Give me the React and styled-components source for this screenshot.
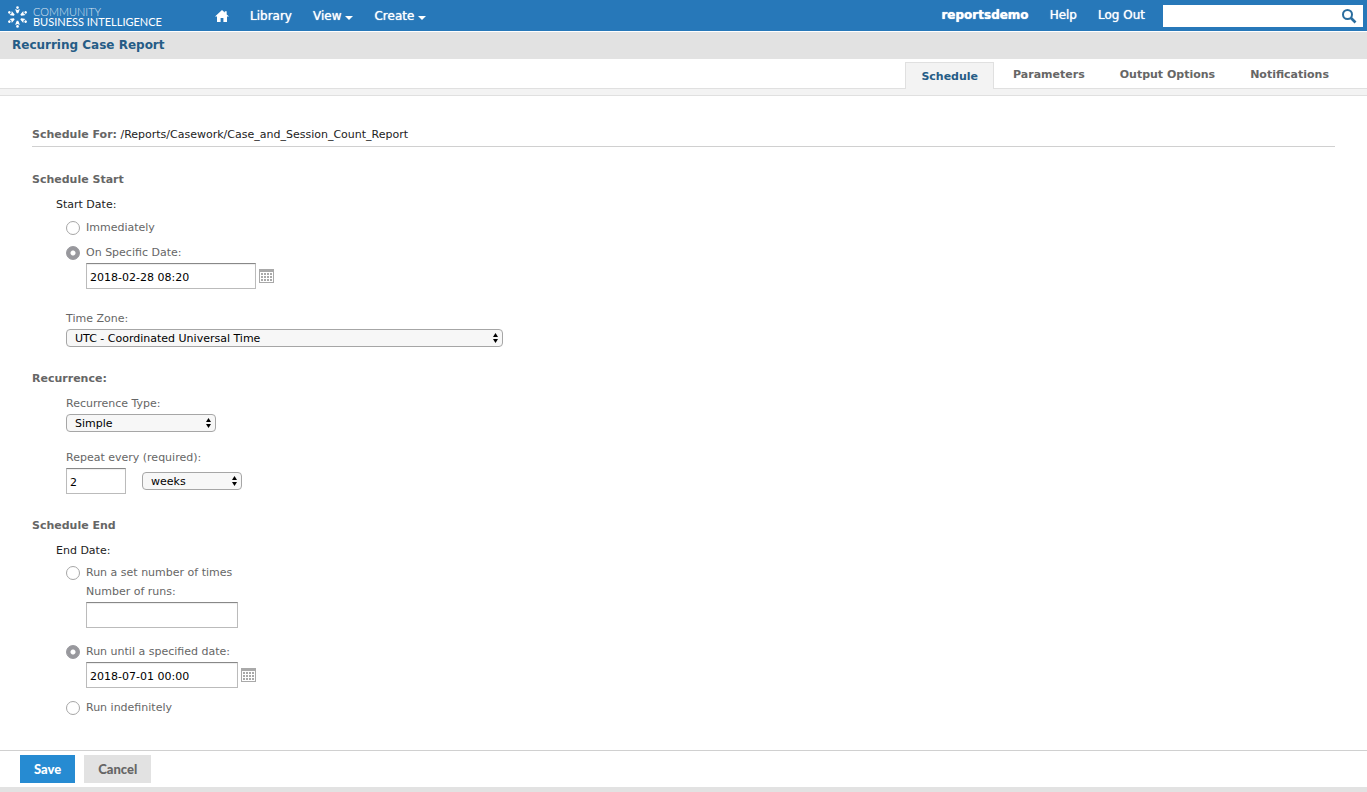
import React from "react";
import styled, { createGlobalStyle, css } from "styled-components";

const GlobalStyle = createGlobalStyle`
  *, *::before, *::after { box-sizing: border-box; }
  body {
    margin: 0;
    background: #fff;
    color: #222;
    font: 11px/20px Verdana, "DejaVu Sans", sans-serif;
  }
`;

const Page = styled.div`
  display: flex;
  flex-direction: column;
  min-height: 100vh;
`;

const TopBar = styled.header`
  display: flex;
  align-items: center;
  height: 31px;
  padding: 0 4px 0 7px;
  background: #2778b9;
`;

const Brand = styled.a`
  display: flex;
  align-items: center;
  gap: 5px;
  width: 208px;
  padding-top: 2px;
  color: #fff;
  text-decoration: none;
`;

const BrandName = styled.span`
  display: flex;
  flex-direction: column;
  font: 11px/10px Lato, sans-serif;
  white-space: nowrap;
`;

const BrandLight = styled.span`
  font-weight: 300;
  opacity: 0.8;
`;

const Nav = styled.nav`
  display: flex;
  align-items: center;
  gap: 21px;
`;

const NavLink = styled.a`
  display: flex;
  align-items: center;
  gap: 4px;
  color: #fff;
  font-size: 12px;
  font-weight: ${(p) => (p.$strong ? "bold" : "normal")};
  text-decoration: none;
  text-shadow: 0 0 1px #fff;
  white-space: nowrap;
`;

const Caret = styled.span`
  margin-top: 4px;
  border: 4px solid transparent;
  border-top-color: #fff;
  border-bottom: 0;
`;

const UserNav = styled(Nav)`
  margin-left: auto;
  padding-bottom: 1px;
`;

const SearchBox = styled.form`
  display: flex;
  align-items: center;
  width: 200px;
  height: 22px;
  margin-left: 18px;
  background: #fff;
`;

const SearchInput = styled.input`
  flex: 1;
  min-width: 0;
  border: 0;
  outline: 0;
  padding: 0 6px;
  background: none;
  font: inherit;
`;

const IconButton = styled.button`
  display: flex;
  padding: 0;
  border: 0;
  background: none;
`;

const SearchButton = styled(IconButton)`
  margin-right: 6px;
`;

const TitleBar = styled.div`
  height: 27px;
  margin-top: 1px;
  padding: 0 12px;
  background: #e2e2e2;
`;

const Title = styled.h1`
  margin: 0;
  color: #255c86;
  font-size: 12px;
  line-height: 26px;
`;

const Tabs = styled.nav`
  display: flex;
  justify-content: flex-end;
  height: 30px;
  padding: 3px 20px 0 0;
  border-bottom: 1px solid #e0e0e0;
`;

const Tab = styled.a`
  height: 27px;
  padding: 0 18px 0 17px;
  color: #666;
  font-weight: bold;
  line-height: 26px;
  text-decoration: none;
  ${(p) =>
    p.$active &&
    css`
      margin-right: 2px;
      padding: 1px 15px 0;
      border: 1px solid #e0e0e0;
      border-bottom: 0;
      background: #f3f3f3;
      color: #255c86;
    `}
`;

const TabStrip = styled.div`
  height: 7px;
  border-bottom: 1px solid #e0e0e0;
  background: #f3f3f3;
`;

const Content = styled.main`
  flex: 1;
  padding: 29px 32px 20px;
`;

const Source = styled.p`
  margin: 0;
  padding-bottom: 1px;
  border-bottom: 1px solid #d0d0d0;
  & > strong { color: #666; }
`;

const Section = styled.section`
  margin-top: ${(p) => p.$gap || 22}px;
`;

const Heading = styled.h2`
  margin: 0 0 5px;
  color: #666;
  font-size: 11px;
`;

const GroupLabel = styled.p`
  margin: 0 0 3px 24px;
`;

const Fields = styled.div`
  display: flex;
  flex-direction: column;
  margin-left: 34px;
  color: #666;
`;

const Field = styled.div`
  display: flex;
  flex-direction: column;
  align-items: flex-start;
  margin-top: ${(p) => p.$gap || 0}px;
  padding-left: ${(p) => (p.$indent ? 20 : 0)}px;
`;

const Choice = styled.label`
  display: flex;
  align-items: center;
  gap: 6px;
  margin-top: ${(p) => p.$gap || 0}px;
  height: ${(p) => (p.$tight ? 18 : 20)}px;
`;

const Radio = styled.input.attrs({ type: "radio" })`
  appearance: none;
  width: 14px;
  height: 14px;
  margin: 0;
  border: 1px solid #a6a6a6;
  border-radius: 50%;
  background: #fff;
  &:checked {
    border-color: #98989d;
    background: radial-gradient(circle, #fff 0 2px, #98989d 3px);
  }
`;

const Row = styled.div`
  display: flex;
  align-items: center;
  gap: ${(p) => p.$gap}px;
`;

const TextInput = styled.input`
  width: ${(p) => p.$width}px;
  height: 26px;
  padding: 2px 3px 0;
  border: 1px solid #bbb;
  border-top-color: #888;
  border-radius: 0;
  outline: 0;
  background: #fff;
  box-shadow: inset 0 1px 1px #eee;
  color: #000;
  font: inherit;
`;

const SelectBox = styled.div`
  display: grid;
  align-items: center;
  width: ${(p) => p.$width}px;
  max-width: 100%;
  & > * { grid-area: 1 / 1; }
  & > svg { justify-self: end; margin-right: 5px; pointer-events: none; }
`;

const Select = styled.select`
  appearance: none;
  width: 100%;
  height: 18px;
  padding: 1px 20px 0 8px;
  border: 1px solid #a6a6a6;
  border-radius: 4px;
  background: #f7f7f7;
  color: #000;
  font: inherit;
  line-height: 16px;
`;

const Footer = styled.footer`
  display: flex;
  gap: 9px;
  padding: 4px 20px;
  border-top: 1px solid #d0d0d0;
  border-bottom: 5px solid #e2e2e2;
`;

const Button = styled.button`
  height: 28px;
  padding: 0 14px;
  border: 0;
  background: ${(p) => (p.$primary ? "#268bd2" : "#e2e2e2")};
  color: ${(p) => (p.$primary ? "#fff" : "#666")};
  font: 900 13px/28px Lato, sans-serif;
`;

function Logo() {
  return (
    <svg width="21" height="22" viewBox="0 0 21 22" fill="#fff" aria-hidden="true">
      {[0, 60, 120, 180, 240, 300].map((a) => (
        <g key={a} transform={`rotate(${a} 10.5 11)`}>
          <circle cx="10.5" cy="1.6" r="1.3" />
          <path d="M8.2 3 10.5 4l2.3-1-.8 2.4-.8 1.9H9.8l-.8-1.9z" />
        </g>
      ))}
    </svg>
  );
}

function HomeIcon() {
  return (
    <svg width="14" height="12" viewBox="0 0 14 12" fill="#fff" aria-hidden="true">
      <path d="M7 0 0 6.6h2V12h3.6V8h2.8v4H12V6.6h2l-2.3-2.2V1.2H9.8v1.4z" />
    </svg>
  );
}

function SearchIcon() {
  return (
    <svg width="16" height="16" viewBox="0 0 16 16" fill="none" stroke="#2a6d9e" aria-hidden="true">
      <circle cx="6.5" cy="6.5" r="4.5" strokeWidth="2" />
      <path d="m10 10 4.5 4.5" strokeWidth="2.6" />
    </svg>
  );
}

function CalendarIcon() {
  return (
    <svg width="15" height="14" viewBox="0 0 15 14" aria-hidden="true">
      <path fill="#a9a9a9" fillRule="evenodd" d="M0 0h15v14H0zM1 3v10h13V3z" />
      {[4, 7, 10].map((y) =>
        [2, 5, 8, 11].map((x) => (
          <rect key={`${x}-${y}`} x={x} y={y} width="2" height="2" fill="#a9a9a9" />
        ))
      )}
    </svg>
  );
}

function DropDown({ id, width, options, label }) {
  return (
    <SelectBox $width={width}>
      <Select id={id} aria-label={label}>
        {options.map((o) => (
          <option key={o}>{o}</option>
        ))}
      </Select>
      <svg width="5" height="10" viewBox="0 0 5 10" aria-hidden="true">
        <path d="M2.5 0 5 4H0zM2.5 10 0 6h5z" />
      </svg>
    </SelectBox>
  );
}

function DateField({ label, value, width }) {
  return (
    <Row $gap={3}>
      <TextInput $width={width} aria-label={label} defaultValue={value} />
      <IconButton type="button" aria-label={`Pick ${label}`}>
        <CalendarIcon />
      </IconButton>
    </Row>
  );
}

export default function App() {
  return (
    <Page>
      <GlobalStyle />
      <TopBar>
        <Brand href="#">
          <Logo />
          <BrandName>
            <BrandLight>COMMUNITY</BrandLight>
            <span>BUSINESS INTELLIGENCE</span>
          </BrandName>
        </Brand>
        <Nav>
          <NavLink href="#" aria-label="Home"><HomeIcon /></NavLink>
          <NavLink href="#">Library</NavLink>
          <NavLink href="#">View<Caret /></NavLink>
          <NavLink href="#">Create<Caret /></NavLink>
        </Nav>
        <UserNav>
          <NavLink href="#" $strong>reportsdemo</NavLink>
          <NavLink href="#">Help</NavLink>
          <NavLink href="#">Log Out</NavLink>
        </UserNav>
        <SearchBox role="search">
          <SearchInput type="text" aria-label="Search" />
          <SearchButton type="button" aria-label="Search"><SearchIcon /></SearchButton>
        </SearchBox>
      </TopBar>

      <TitleBar><Title>Recurring Case Report</Title></TitleBar>
      <Tabs>
        <Tab href="#" $active>Schedule</Tab>
        <Tab href="#">Parameters</Tab>
        <Tab href="#">Output Options</Tab>
        <Tab href="#">Notifications</Tab>
      </Tabs>
      <TabStrip />

      <Content>
        <Source>
          <strong>Schedule For:</strong> /Reports/Casework/Case_and_Session_Count_Report
        </Source>

        <Section $gap={23}>
          <Heading>Schedule Start</Heading>
          <GroupLabel>Start Date:</GroupLabel>
          <Fields>
            <Choice><Radio name="start" />Immediately</Choice>
            <Choice $gap={5}><Radio name="start" defaultChecked />On Specific Date:</Choice>
            <Field $indent>
              <DateField label="start date" value="2018-02-28 08:20" width={170} />
            </Field>
            <Field $gap={20}>
              <label htmlFor="zone">Time Zone:</label>
              <DropDown id="zone" width={437} options={["UTC - Coordinated Universal Time"]} />
            </Field>
          </Fields>
        </Section>

        <Section>
          <Heading>Recurrence:</Heading>
          <Fields>
            <Field>
              <label htmlFor="type">Recurrence Type:</label>
              <DropDown id="type" width={150} options={["Simple"]} />
            </Field>
            <Field $gap={16}>
              <label htmlFor="every">Repeat every (required):</label>
              <Row $gap={16}>
                <TextInput id="every" $width={60} defaultValue="2" />
                <DropDown label="Interval unit" width={100} options={["weeks"]} />
              </Row>
            </Field>
          </Fields>
        </Section>

        <Section>
          <Heading>Schedule End</Heading>
          <GroupLabel>End Date:</GroupLabel>
          <Fields>
            <Choice $tight><Radio name="end" />Run a set number of times</Choice>
            <Field $indent>
              <label htmlFor="runs">Number of runs:</label>
              <TextInput id="runs" $width={152} />
            </Field>
            <Choice $gap={14}><Radio name="end" defaultChecked />Run until a specified date:</Choice>
            <Field $indent>
              <DateField label="end date" value="2018-07-01 00:00" width={152} />
            </Field>
            <Choice $gap={10}><Radio name="end" />Run indefinitely</Choice>
          </Fields>
        </Section>
      </Content>

      <Footer>
        <Button type="button" $primary>Save</Button>
        <Button type="button">Cancel</Button>
      </Footer>
    </Page>
  );
}
